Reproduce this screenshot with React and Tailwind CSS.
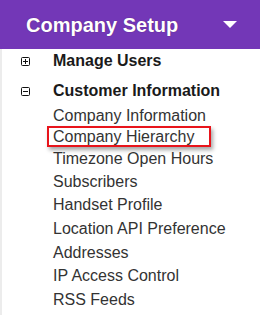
import React from "react";

const items = [
  { label: "Company Information", h: "h-[21px]" },
  { label: "Company Hierarchy", h: "h-[22px]", boxed: true },
  { label: "Timezone Open Hours", h: "h-[22px]" },
  { label: "Subscribers", h: "h-[23px]" },
  { label: "Handset Profile", h: "h-[24px]" },
  { label: "Location API Preference", h: "h-[24px]" },
  { label: "Addresses", h: "h-[23px]" },
  { label: "IP Access Control", h: "h-[24px]" },
  { label: "RSS Feeds", h: "h-[23px]" },
];

function BoxIcon({ plus }) {
  return (
    <svg width="9" height="9" viewBox="0 0 9 9" className="block">
      <rect x="0.5" y="0.5" width="8" height="8" rx="1" fill="#fff" stroke="#111" strokeWidth="1" />
      <line x1="2" y1="4.5" x2="7" y2="4.5" stroke="#111" strokeWidth="1" />
      {plus && <line x1="4.5" y1="2" x2="4.5" y2="7" stroke="#111" strokeWidth="1" />}
    </svg>
  );
}

export default function App() {
  return (
    <div className="w-[260px] h-[315px] bg-white overflow-hidden font-['Liberation_Sans',Arial,sans-serif]">
      <div className="h-[49px] bg-[#7337b7] flex items-center justify-between pl-[26px] pr-[23px]">
        <span className="text-white font-bold text-[20px] leading-none [text-shadow:0_0_1px_rgba(60,0,60,0.6)]">
          Company Setup
        </span>
        <svg width="14" height="7" viewBox="0 0 14 7" className="block">
          <polygon points="0,0 14,0 7,7" fill="#fff" />
        </svg>
      </div>
      <div className="border-l-2 border-[#ececec] h-[266px]">
        <div className="h-[24px] flex items-center">
          <div className="w-[19px]" />
          <BoxIcon plus />
          <span className="ml-[23px] text-[16px] font-bold text-[#1a1a1a]">Manage Users</span>
        </div>
        <div className="h-[24px] mt-[6px] flex items-center">
          <div className="w-[19px]" />
          <BoxIcon />
          <span className="ml-[23px] text-[16px] font-bold text-[#1a1a1a]">Customer Information</span>
        </div>
        <div className="mt-[2px] pl-[51px]">
          {items.map((it) => (
            <div key={it.label} className={`${it.h} relative flex items-center text-[16px] text-[#333]`}>
              {it.boxed && (
                <span className="absolute left-[-6px] top-0 w-[164px] h-[21px] border-2 border-[#e8141b] shadow-[2px_3px_4px_rgba(0,0,0,0.35)]" />
              )}
              <span className="relative">{it.label}</span>
            </div>
          ))}
        </div>
      </div>
    </div>
  );
}
